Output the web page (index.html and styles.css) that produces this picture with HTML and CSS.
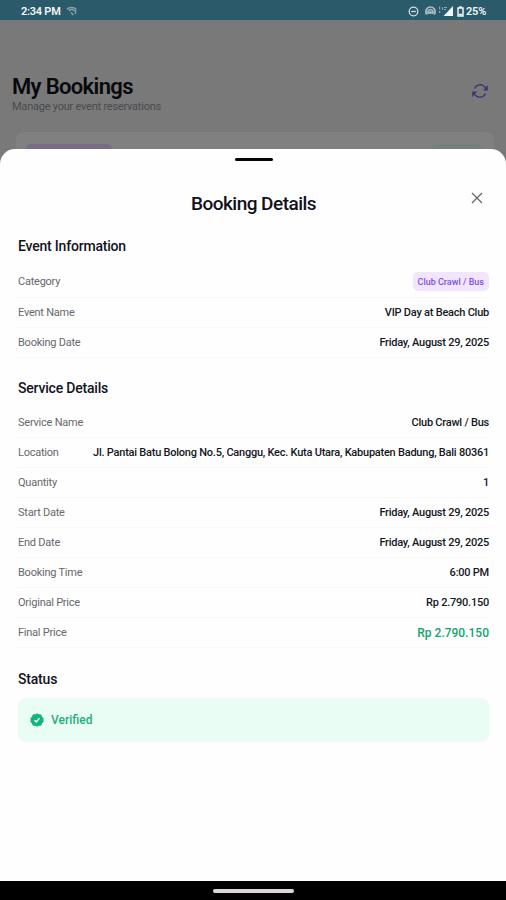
FILE: index.html
```html
<!DOCTYPE html>
<html lang="en">
<head>
<meta charset="utf-8">
<title>Booking Details</title>
<link rel="stylesheet" href="styles.css">
</head>
<body>
<div class="screen">
  <header class="statusbar">
    <span class="clock">2:34 PM</span>
    <svg class="cast" width="12" height="10" viewBox="0 0 12 10" fill="none" stroke="currentColor" stroke-width="1.5"><path d="M1 3.500C3 .8 8 .8 10.500 3.500M3 5C4.500 3 7 3 8.500 5M5 6.500l2.500 2.500M9.500 4v4"/></svg>
    <div class="indicators">
      <svg width="11" height="11" viewBox="0 0 11 11" fill="none" stroke="currentColor" stroke-width="1.300"><circle cx="5.500" cy="5.500" r="4.300"/><path d="M3.200 5.500h4.600"/></svg>
      <svg class="hotspot" width="11" height="10" viewBox="0 0 11 10" fill="none" stroke="currentColor" stroke-width="1.700"><path d="M1.500 8.500C-.5 3 3 1 5.500 1s6 2 4 7.500M3.500 8C2 5 4 3.500 5.500 3.500S9 5 7.500 8"/><circle cx="5.500" cy="6.500" r=".7" fill="currentColor"/></svg>
      <svg class="signal" width="16" height="11" viewBox="0 0 16 11" fill="currentColor"><path d="M15 0v10H5.500z"/><path opacity=".5" d="M1 .5h1.200v3H1zM1 5h1.200v2H1zM4 1h1v3H4zM6 1h3v1H6zM6 3h2v1H6z"/></svg>
      <svg class="battery" width="7" height="11" viewBox="0 0 7 11" fill="none" stroke="currentColor" stroke-width="1.500"><path d="M1 2h5v8H1zM2.200 1h2.600"/><path d="M2 8.500h3"/></svg>
      <span>25%</span>
    </div>
  </header>
  <main class="page">
    <div class="page-head">
      <div>
        <h1 class="page-title">My Bookings</h1>
        <p class="page-sub">Manage your event reservations</p>
      </div>
      <svg class="refresh" width="18" height="18" viewBox="0 0 18 18" fill="none" stroke="currentColor" stroke-width="1.300"><path d="M3.600 6.600A6 6 0 0 1 14 5.200L16 7.500M14.400 11.400A6 6 0 0 1 4 12.800L2 10.500"/><path fill="currentColor" stroke="none" d="M16.800 3v5.500h-5zM1.200 15V9.500h5z"/></svg>
    </div>
    <div class="card"><span class="card-tag"></span><span class="card-state"></span></div>
  </main>
  <section class="sheet">
    <div class="handle"></div>
    <div class="sheet-head">
      <h2 class="sheet-title">Booking Details</h2>
      <svg class="close" width="14" height="14" viewBox="0 0 14 14" fill="none" stroke="currentColor" stroke-width="1.300"><path d="M2 2l10 10M12 2L2 12"/></svg>
    </div>
    <h3 class="group">Event Information</h3>
    <dl class="rows">
      <div class="row row-category"><dt>Category</dt><dd class="chip">Club Crawl / Bus</dd></div>
      <div class="row"><dt>Event Name</dt><dd>VIP Day at Beach Club</dd></div>
      <div class="row"><dt>Booking Date</dt><dd>Friday, August 29, 2025</dd></div>
    </dl>
    <h3 class="group group-service">Service Details</h3>
    <dl class="rows">
      <div class="row"><dt>Service Name</dt><dd>Club Crawl / Bus</dd></div>
      <div class="row"><dt>Location</dt><dd>Jl. Pantai Batu Bolong No.5, Canggu, Kec. Kuta Utara, Kabupaten Badung, Bali 80361</dd></div>
      <div class="row"><dt>Quantity</dt><dd>1</dd></div>
      <div class="row"><dt>Start Date</dt><dd>Friday, August 29, 2025</dd></div>
      <div class="row"><dt>End Date</dt><dd>Friday, August 29, 2025</dd></div>
      <div class="row"><dt>Booking Time</dt><dd>6:00 PM</dd></div>
      <div class="row"><dt>Original Price</dt><dd>Rp 2.790.150</dd></div>
      <div class="row"><dt>Final Price</dt><dd class="final">Rp 2.790.150</dd></div>
    </dl>
    <h3 class="group group-status">Status</h3>
    <div class="verified">
      <svg width="14" height="14" viewBox="0 0 14 14"><path fill="#12b57c" stroke="#12b57c" stroke-linejoin="round" d="M7 .8l1.800 1 2.100.1.800 2L13.200 5.500 12.800 7l.4 1.700-1.500 1.500-.8 2-2.100.1L7 13.200l-1.800-.9-2.100-.1-.8-2L.8 8.700 1.200 7 .8 5.500l1.500-1.600.8-2 2.100-.1z"/><path fill="none" stroke="#e9fff5" stroke-width="1.500" d="M4.500 7.300l1.700 1.600 3.300-3.600"/></svg>
      <span>Verified</span>
    </div>
  </section>
  <footer class="navbar"><div class="pill"></div></footer>
</div>
</body>
</html>
```

FILE: styles.css
```css
* { box-sizing: border-box; margin: 0; padding: 0; }
body { font-family: Roboto, "Liberation Sans", sans-serif; background: #000; overflow: hidden; }
svg { display: block; flex: none; }
.screen { position: relative; width: 506px; height: 900px; display: flex; flex-direction: column; }
.statusbar { height: 20px; background: #2b5b6a; color: #f0f6f8; display: flex; align-items: center; padding: 2px 20px 0 21px; font-size: 11px; font-weight: 600; letter-spacing: -.25px; }
.clock { white-space: nowrap; }
.cast { margin-left: 5px; opacity: .45; }
.indicators { margin-left: auto; display: flex; align-items: center; }
.indicators > svg:first-child { opacity: .85; }
.hotspot { margin-left: 6px; opacity: .65; }
.signal { margin-left: 2px; }
.battery { margin: 0 2px 0 3px; }
.page { flex: 1; background: #797979; padding: 54px 12px 0; }
.page-head { display: flex; justify-content: space-between; padding-right: 5px; }
.page-title { font-size: 22px; line-height: 25px; font-weight: 600; color: #08090d; letter-spacing: -.65px; }
.page-sub { font-size: 11px; line-height: 14px; color: #484b50; letter-spacing: -.23px; margin-top: 1px; }
.refresh { margin-top: 8px; color: #40336f; }
.card { height: 60px; margin: 18px 0 0 4px; background: #808080; border-radius: 8px; padding: 12px 10px; display: flex; justify-content: space-between; }
.card-tag { width: 86px; height: 20px; border-radius: 5px; background: #776c82; }
.card-state { width: 54px; height: 20px; border-radius: 8px; background: #75807b; }
.sheet { position: absolute; left: 0; top: 149px; width: 506px; height: 732px; background: #fefefe; border-radius: 15px 15px 0 0; padding: 9px 17px 0 18px; }
.handle { width: 38px; height: 3px; border-radius: 2px; background: #050507; margin: 0 auto; }
.sheet-head { display: grid; grid-template-columns: 1fr auto 1fr; margin-top: 30px; }
.sheet-title { grid-column: 2; font-size: 19px; line-height: 28px; font-weight: 500; color: #10111b; margin-top: -1px; letter-spacing: -.53px; }
.close { justify-self: end; margin-right: 5px; color: #666; }
.group { font-size: 14px; line-height: 20px; font-weight: 500; color: #12131d; margin-top: 18px; letter-spacing: -.2px; }
.group-service { margin-top: 20px; }
.group-status { margin-top: 21px; }
.rows { margin-top: 10px; }
.row { display: flex; align-items: center; justify-content: space-between; height: 30px; border-bottom: 1px solid #f8f8f8; font-size: 11px; white-space: nowrap; letter-spacing: -.235px; }
.row-category { height: 32px; }
.row dt { color: #66686c; }
.row dd { color: #15161f; font-weight: 500; }
.row .chip { height: 19px; display: flex; align-items: center; padding: 0 5px; border-radius: 5px; background: #f1e6fe; color: #8150df; font-size: 9px; letter-spacing: 0; }
.row .final { color: #12a46e; font-size: 12px; letter-spacing: 0; }
.verified { margin-top: 9px; height: 44px; border-radius: 8px; background: #eafdf4; display: flex; align-items: center; gap: 7px; padding-left: 12px; font-size: 12px; font-weight: 500; color: #27ae7d; }
.navbar { height: 19px; background: #000; display: flex; align-items: center; justify-content: center; }
.pill { width: 81px; height: 4px; border-radius: 2px; background: #ddd6d8; }
```
